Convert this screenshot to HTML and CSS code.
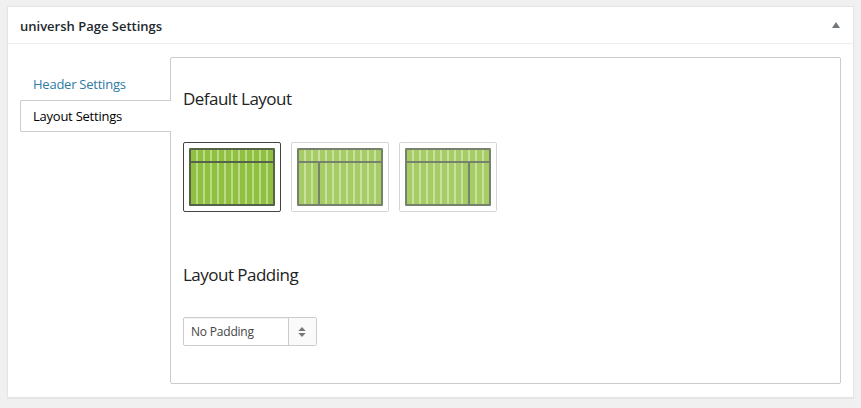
FILE: index.html
```html
<!DOCTYPE html>
<html lang="en">
<head>
<meta charset="utf-8">
<title>universh Page Settings</title>
<link rel="stylesheet" href="styles.css">
</head>
<body>
<section class="metabox">
  <header class="metabox-header">
    <h2>universh Page Settings</h2>
    <svg class="toggle" width="8" height="6" viewBox="0 0 8 6"><path d="M4 0L8 6H0Z" fill="#72777c"/></svg>
  </header>
  <div class="metabox-body">
    <nav class="tabs">
      <a class="tab tab-header">Header Settings</a>
      <a class="tab tab-layout active">Layout Settings</a>
    </nav>
    <div class="panel">
      <h3 class="layout-title">Default Layout</h3>
      <div class="options">
        <div class="option selected">
          <svg width="86" height="58" viewBox="0 0 86 58">
            <rect width="86" height="58" rx="1" fill="#8fc03f"/>
            <path d="M8 2V56M15 2V56M22 2V56M29 2V56M36 2V56M43 2V56M50 2V56M57 2V56M64 2V56M71 2V56M78 2V56" stroke="#bcd985" stroke-width="2"/>
            <path d="M2 14H84" stroke="#56634b" stroke-width="2"/>
            <rect x="1" y="1" width="84" height="56" rx=".5" fill="none" stroke="#56634b" stroke-width="2"/>
          </svg>
        </div>
        <div class="option">
          <svg width="86" height="58" viewBox="0 0 86 58">
            <rect width="86" height="58" rx="1" fill="#8fc03f"/>
            <path d="M8 2V56M15 2V56M22 2V56M29 2V56M36 2V56M43 2V56M50 2V56M57 2V56M64 2V56M71 2V56M78 2V56" stroke="#bcd985" stroke-width="2"/>
            <path d="M2 14H84M22 14V56" stroke="#56634b" stroke-width="2"/>
            <rect x="1" y="1" width="84" height="56" rx=".5" fill="none" stroke="#56634b" stroke-width="2"/>
          </svg>
        </div>
        <div class="option">
          <svg width="86" height="58" viewBox="0 0 86 58">
            <rect width="86" height="58" rx="1" fill="#8fc03f"/>
            <path d="M8 2V56M15 2V56M22 2V56M29 2V56M36 2V56M43 2V56M50 2V56M57 2V56M64 2V56M71 2V56M78 2V56" stroke="#bcd985" stroke-width="2"/>
            <path d="M2 14H84M64 14V56" stroke="#56634b" stroke-width="2"/>
            <rect x="1" y="1" width="84" height="56" rx=".5" fill="none" stroke="#56634b" stroke-width="2"/>
          </svg>
        </div>
      </div>
      <h3 class="padding-title">Layout Padding</h3>
      <div class="select">
        <span class="select-value">No Padding</span>
        <span class="select-arrows">
          <svg width="8" height="10" viewBox="0 0 8 10"><path d="M4 0L7.7 4H.3ZM4 10L7.7 6H.3Z" fill="#777"/></svg>
        </span>
      </div>
    </div>
  </div>
</section>
</body>
</html>
```

FILE: styles.css
```css
* {
  box-sizing: border-box;
}

body {
  margin: 0;
  padding: 6px 7px 10px;
  height: 408px;
  overflow: hidden;
  background: #f0f0f0;
  font-family: "Open Sans", "Noto Sans", sans-serif;
  font-size: 13px;
  color: #222;
}

h2,
h3 {
  margin: 0;
  white-space: nowrap;
}

.metabox {
  width: 847px;
  height: 392px;
  background: #fff;
  border: 1px solid #e4e4e4;
  box-shadow: 0 1px 1px rgba(0, 0, 0, 0.04);
}

.metabox-header {
  display: flex;
  align-items: center;
  justify-content: space-between;
  height: 37px;
  padding: 0 13px 0 12px;
  border-bottom: 1px solid #eee;
}

.metabox-header h2 {
  font-size: 13px;
  font-weight: 600;
  line-height: 20px;
  padding-top: 2px;
  color: #23282d;
}

.metabox-body {
  display: flex;
  padding: 13px 12px;
}

.tabs {
  width: 151px;
  margin-right: -1px;
  padding-top: 11px;
  position: relative;
}

.tab {
  display: block;
  height: 32px;
  padding: 0 12px;
  border: 1px solid transparent;
  line-height: 31px;
  letter-spacing: -0.24px;
  white-space: nowrap;
  color: #2f7aa3;
}

.tab.active {
  border-color: #ccc;
  border-right: 0;
  border-radius: 2px 0 0 2px;
  background: #fff;
  color: #000;
}

.panel {
  width: 671px;
  height: 327px;
  padding: 29px 12px 0;
  border: 1px solid #ccc;
  border-radius: 2px;
}

.panel h3 {
  font-size: 17px;
  font-weight: 400;
  line-height: 24px;
  letter-spacing: -0.52px;
  color: #222;
}

.options {
  display: flex;
  gap: 10px;
  margin: 31px 0 51px;
}

.option {
  width: 98px;
  height: 70px;
  padding: 5px;
  border: 1px solid #d5d5d5;
  border-radius: 2px;
}

.option svg {
  display: block;
  opacity: 0.8;
}

.option.selected {
  border-color: #444;
}

.option.selected svg {
  opacity: 1;
}

.select {
  display: flex;
  width: 134px;
  height: 29px;
  margin-top: 30px;
  border: 1px solid #ccc;
  border-radius: 2px;
  font-size: 12px;
  line-height: 28px;
  letter-spacing: -0.2px;
  color: #444;
}

.select-value {
  flex: 1;
  padding-left: 7px;
  box-shadow: inset 0 1px 1px rgba(0, 0, 0, 0.05);
}

.select-arrows {
  display: flex;
  align-items: center;
  justify-content: center;
  width: 28px;
  padding-right: 1px;
  border-left: 1px solid #ccc;
  background: #fafafa;
}
```
